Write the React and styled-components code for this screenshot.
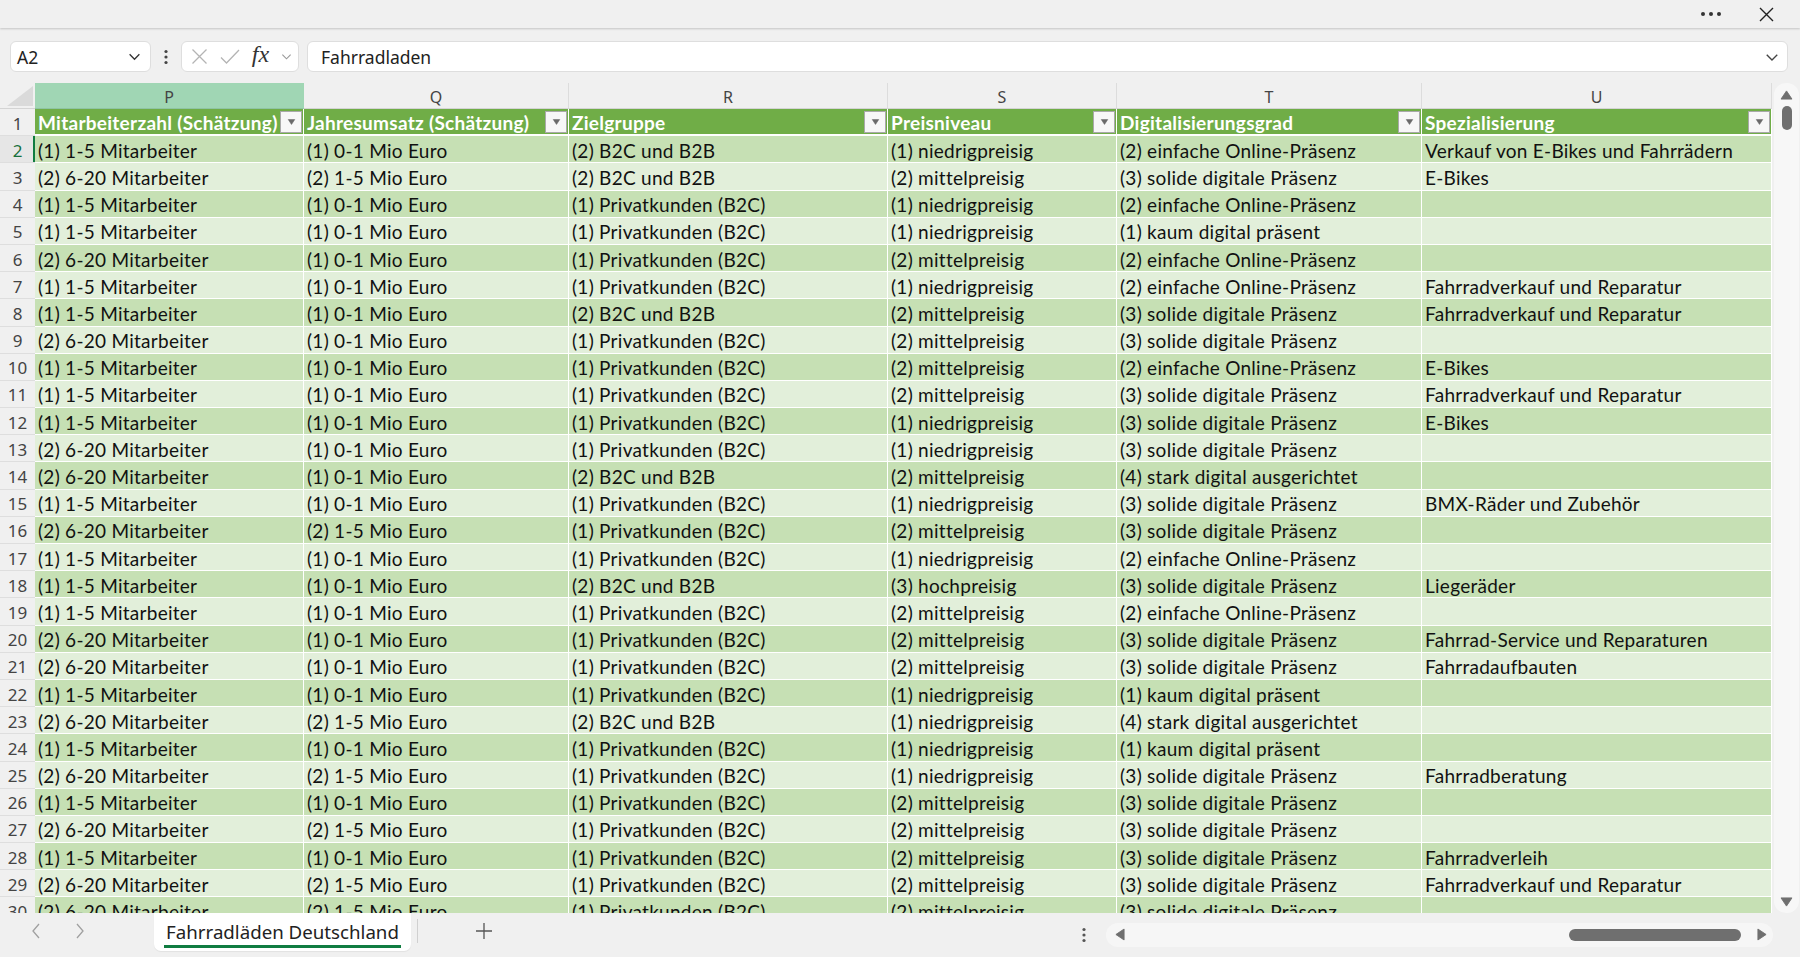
import React from "react";
import styled, { createGlobalStyle } from "styled-components";

const GlobalStyle = createGlobalStyle`
  html, body { margin: 0; padding: 0; }
  body {
    background: #f0f0f0;
    font-family: "Noto Sans", "Open Sans", sans-serif;
    color: #222;
  }
  * { box-sizing: border-box; }
`;

const COLS = [269, 265, 319, 229, 305, 350];
const TEMPLATE = `35px ${COLS.map((c) => `${c}px`).join(" ")}`;

const HEADERS = [
  "Mitarbeiterzahl (Schätzung)",
  "Jahresumsatz (Schätzung)",
  "Zielgruppe",
  "Preisniveau",
  "Digitalisierungsgrad",
  "Spezialisierung",
];
const LETTERS = ["P", "Q", "R", "S", "T", "U"];

const M1 = "(1) 1-5 Mitarbeiter";
const M2 = "(2) 6-20 Mitarbeiter";
const U1 = "(1) 0-1 Mio Euro";
const U2 = "(2) 1-5 Mio Euro";
const Z1 = "(1) Privatkunden (B2C)";
const Z2 = "(2) B2C und B2B";
const P1 = "(1) niedrigpreisig";
const P2 = "(2) mittelpreisig";
const P3 = "(3) hochpreisig";
const D1 = "(1) kaum digital präsent";
const D2 = "(2) einfache Online-Präsenz";
const D3 = "(3) solide digitale Präsenz";
const D4 = "(4) stark digital ausgerichtet";
const FVR = "Fahrradverkauf und Reparatur";

const ROWS = [
  [M1, U1, Z2, P1, D2, "Verkauf von E-Bikes und Fahrrädern"],
  [M2, U2, Z2, P2, D3, "E-Bikes"],
  [M1, U1, Z1, P1, D2, ""],
  [M1, U1, Z1, P1, D1, ""],
  [M2, U1, Z1, P2, D2, ""],
  [M1, U1, Z1, P1, D2, FVR],
  [M1, U1, Z2, P2, D3, FVR],
  [M2, U1, Z1, P2, D3, ""],
  [M1, U1, Z1, P2, D2, "E-Bikes"],
  [M1, U1, Z1, P2, D3, FVR],
  [M1, U1, Z1, P1, D3, "E-Bikes"],
  [M2, U1, Z1, P1, D3, ""],
  [M2, U1, Z2, P2, D4, ""],
  [M1, U1, Z1, P1, D3, "BMX-Räder und Zubehör"],
  [M2, U2, Z1, P2, D3, ""],
  [M1, U1, Z1, P1, D2, ""],
  [M1, U1, Z2, P3, D3, "Liegeräder"],
  [M1, U1, Z1, P2, D2, ""],
  [M2, U1, Z1, P2, D3, "Fahrrad-Service und Reparaturen"],
  [M2, U1, Z1, P2, D3, "Fahrradaufbauten"],
  [M1, U1, Z1, P1, D1, ""],
  [M2, U2, Z2, P1, D4, ""],
  [M1, U1, Z1, P1, D1, ""],
  [M2, U2, Z1, P1, D3, "Fahrradberatung"],
  [M1, U1, Z1, P2, D3, ""],
  [M2, U2, Z1, P2, D3, ""],
  [M1, U1, Z1, P2, D3, "Fahrradverleih"],
  [M2, U2, Z1, P2, D3, FVR],
  [M2, U2, Z1, P2, D3, ""],
];

/* ---------- window frame ---------- */

const Window = styled.div`
  width: 1800px;
  height: 957px;
  display: flex;
  flex-direction: column;
  overflow: hidden;
  background: #f0f0f0;
`;

const TopBar = styled.div`
  height: 28px;
  flex: none;
  display: flex;
  align-items: center;
  justify-content: flex-end;
  gap: 37px;
  padding-right: 26px;
  background: #f0f0f0;
  box-shadow: 0 1px 2px rgba(0, 0, 0, 0.18);
  position: relative;
  z-index: 1;
`;

const BarIcon = styled.button`
  border: 0;
  padding: 0;
  background: transparent;
  display: flex;
  align-items: center;
  justify-content: center;
  color: #333;
`;

/* ---------- formula bar ---------- */

const FormulaBar = styled.div`
  height: 55px;
  flex: none;
  display: flex;
  align-items: flex-start;
  padding: 13px 12px 0 10px;
`;

const Field = styled.div`
  height: 31px;
  background: #fff;
  border: 1px solid #dedede;
  border-radius: 6px;
  display: flex;
  align-items: center;
`;

const NameBox = styled(Field)`
  width: 141px;
  padding: 0 9px 0 6px;
  justify-content: space-between;
  font-size: 17.5px;
  color: #222;
`;

const Divider = styled.div`
  width: 30px;
  height: 31px;
  display: flex;
  align-items: center;
  justify-content: center;
  color: #444;
`;

const ActionBox = styled(Field)`
  width: 118px;
  padding: 0 6px 0 9px;
  justify-content: space-between;
`;

const Fx = styled.span`
  font-family: "Liberation Serif", "DejaVu Serif", serif;
  font-style: italic;
  font-size: 24px;
  color: #333;
  margin-top: -4px;
`;

const FormulaInput = styled(Field)`
  flex: 1;
  margin-left: 8px;
  padding: 0 8px 0 13px;
  justify-content: space-between;
  font-size: 17.5px;
  color: #222;
`;

/* ---------- grid ---------- */

const Body = styled.div`
  height: 830px;
  flex: none;
  display: flex;
`;

const Sheet = styled.div`
  width: 1772px;
  display: flex;
  flex-direction: column;
  overflow: hidden;
  background: #fff;
`;

const LetterRow = styled.div`
  height: 26px;
  flex: none;
  display: grid;
  grid-template-columns: ${TEMPLATE};
  background: #f0f0f0;
`;

const Corner = styled.div`
  border-bottom: 1px solid #d4d4d4;
  display: flex;
  align-items: flex-end;
  justify-content: flex-end;
  padding: 0 2px 2px 0;
`;

const Letter = styled.div`
  display: flex;
  align-items: center;
  justify-content: center;
  font-size: 16px;
  color: #444;
  background: ${(p) => (p.$active ? "#a0d6b4" : "#f0f0f0")};
  border-right: 1px solid ${(p) => (p.$active ? "#a0d6b4" : "#dcdcdc")};
  border-bottom: 1px solid ${(p) => (p.$active ? "#8fc4a3" : "#d4d4d4")};
  padding-top: 3px;
`;

const Row = styled.div`
  height: 27.2px;
  flex: none;
  display: grid;
  grid-template-columns: ${TEMPLATE};
`;

const RowNum = styled.div`
  display: flex;
  align-items: center;
  justify-content: center;
  padding-top: 2px;
  font-size: 17px;
  color: ${(p) => (p.$active ? "#18703c" : "#444")};
  background: ${(p) => (p.$active ? "#e6e6e6" : "#f0f0f0")};
  border-bottom: 1px solid #dedede;
  box-shadow: ${(p) => (p.$active ? "inset -2px 0 0 #107c41" : "none")};
`;

const Cell = styled.div`
  display: flex;
  align-items: center;
  padding: 2px 2px 0 3px;
  white-space: nowrap;
  overflow: hidden;
  font-family: "Lato", "Noto Sans", sans-serif;
  font-size: 19px;
  letter-spacing: 0.27px;
  color: #111;
  background: ${(p) => (p.$band ? "#c6e0b4" : "#e2efda")};
  border-right: 1px solid #fff;
  border-bottom: 1px solid #fff;
`;

const HeadCell = styled(Cell)`
  justify-content: space-between;
  background: #70ad47;
  color: #fff;
  font-weight: 700;
  border-bottom: 2px solid #fff;
  padding-right: 1px;
`;

const FilterButton = styled.span`
  width: 22px;
  height: 22px;
  flex: none;
  display: flex;
  align-items: center;
  justify-content: center;
  background: #f7f7f7;
  border: 1px solid #a9a9a9;
  margin-bottom: 1px;
`;

/* ---------- scrollbars ---------- */

const VScroll = styled.div`
  width: 28px;
  display: flex;
  padding: 0 1px 0 2px;
`;

const VTrack = styled.div`
  flex: 1;
  border-radius: 12px;
  background: #f7f7f7;
  display: flex;
  flex-direction: column;
  align-items: center;
  padding: 7px 0 6px;
`;

const VThumb = styled.div`
  width: 10px;
  height: 24px;
  border-radius: 5px;
  background: #6f6f6f;
  margin-top: 6px;
`;

const Spacer = styled.div`
  flex: 1;
`;

/* ---------- sheet tabs ---------- */

const TabBar = styled.div`
  height: 44px;
  flex: none;
  display: flex;
  align-items: flex-start;
  background: #f0f0f0;
`;

const NavGroup = styled.div`
  height: 36px;
  display: flex;
  align-items: center;
  gap: 34px;
  padding-left: 31px;
  width: 154px;
  color: #9a9a9a;
`;

const Tab = styled.div`
  width: 257px;
  height: 38px;
  background: #fff;
  border-radius: 0 0 7px 7px;
  display: flex;
  flex-direction: column;
  align-items: center;
  justify-content: center;
  font-size: 18.7px;
  color: #222;
  box-shadow: 0 1px 1px rgba(0, 0, 0, 0.06);
`;

const TabLabel = styled.span`
  padding: 0 2px 2px;
  border-bottom: 3px solid #107c41;
  line-height: 23px;
  margin-top: 4px;
`;

const TabSep = styled.div`
  width: 1px;
  height: 24px;
  background: #d0d0d0;
  margin: 6px 0 0 6px;
`;

const AddButton = styled.div`
  width: 132px;
  height: 36px;
  display: flex;
  align-items: center;
  justify-content: center;
  color: #555;
`;

const RightGroup = styled.div`
  margin-left: auto;
  display: flex;
  align-items: center;
  height: 38px;
  padding: 5px 27px 0 0;
  gap: 10px;
`;

const Kebab = styled.div`
  width: 24px;
  display: flex;
  justify-content: center;
  color: #444;
`;

const HTrack = styled.div`
  width: 667px;
  height: 24px;
  border-radius: 12px;
  background: #f6f6f6;
  display: flex;
  align-items: center;
  padding: 0 6px 0 9px;
`;

const HThumb = styled.div`
  width: 172px;
  height: 12px;
  border-radius: 6px;
  background: #6f6f6f;
  margin-left: auto;
  margin-right: 16px;
`;

/* ---------- small drawings ---------- */

const Chevron = ({ size = 12, color = "#333" }) => (
  <svg width={size} height={size} viewBox="0 0 12 12" fill="none">
    <path d="M1.5 4l4.5 4.5L10.5 4" stroke={color} strokeWidth="1.2" />
  </svg>
);

const Tri = ({ dir, color = "#6f6f6f", w = 12, h = 10 }) => {
  const pts = {
    up: "0,10 6,1 12,10",
    down: "0,1 12,1 6,10",
    left: "10,0 10,12 1,6",
    right: "1,0 1,12 10,6",
  }[dir];
  const vb = dir === "up" || dir === "down" ? "0 0 12 11" : "0 0 11 12";
  return (
    <svg width={w} height={h} viewBox={vb}>
      <polygon points={pts} fill={color} strokeLinejoin="round" stroke={color} strokeWidth="1" />
    </svg>
  );
};

const VDots = ({ color = "#444" }) => (
  <svg width="4" height="16" viewBox="0 0 4 16">
    <circle cx="2" cy="2.5" r="1.6" fill={color} />
    <circle cx="2" cy="8" r="1.6" fill={color} />
    <circle cx="2" cy="13.5" r="1.6" fill={color} />
  </svg>
);

export default function App() {
  return (
    <Window>
      <GlobalStyle />
      <TopBar>
        <BarIcon aria-label="Weitere Optionen">
          <svg width="22" height="6" viewBox="0 0 22 6">
            <circle cx="3" cy="3" r="2" fill="#333" />
            <circle cx="11" cy="3" r="2" fill="#333" />
            <circle cx="19" cy="3" r="2" fill="#333" />
          </svg>
        </BarIcon>
        <BarIcon aria-label="Schließen">
          <svg width="15" height="15" viewBox="0 0 15 15">
            <path d="M1 1l13 13M14 1L1 14" stroke="#222" strokeWidth="1.4" />
          </svg>
        </BarIcon>
      </TopBar>

      <FormulaBar>
        <NameBox>
          <span>A2</span>
          <Chevron size={13} />
        </NameBox>
        <Divider>
          <VDots />
        </Divider>
        <ActionBox>
          <svg width="17" height="17" viewBox="0 0 17 17">
            <path d="M1.5 1.5l14 14M15.5 1.5l-14 14" stroke="#b4b4b4" strokeWidth="1.3" />
          </svg>
          <svg width="20" height="16" viewBox="0 0 20 16">
            <path d="M1 8.5l5.5 5.5L19 1" stroke="#b4b4b4" strokeWidth="1.3" fill="none" />
          </svg>
          <Fx>fx</Fx>
          <Chevron size={11} color="#999" />
        </ActionBox>
        <FormulaInput>
          <span>Fahrradladen</span>
          <Chevron size={14} color="#444" />
        </FormulaInput>
      </FormulaBar>

      <Body>
        <Sheet>
          <LetterRow>
            <Corner>
              <svg width="26" height="20" viewBox="0 0 26 20">
                <polygon points="26,0 26,20 0,20" fill="#dadada" />
              </svg>
            </Corner>
            {LETTERS.map((l, i) => (
              <Letter key={l} $active={i === 0}>
                {l}
              </Letter>
            ))}
          </LetterRow>

          <Row>
            <RowNum>1</RowNum>
            {HEADERS.map((h) => (
              <HeadCell key={h}>
                <span>{h}</span>
                <FilterButton>
                  <Tri dir="down" color="#6a6a6a" w={9} h={6} />
                </FilterButton>
              </HeadCell>
            ))}
          </Row>

          {ROWS.map((cells, r) => (
            <Row key={r}>
              <RowNum $active={r === 0}>{r + 2}</RowNum>
              {cells.map((c, j) => (
                <Cell key={j} $band={r % 2 === 0}>
                  {c}
                </Cell>
              ))}
            </Row>
          ))}
        </Sheet>

        <VScroll>
          <VTrack>
            <Tri dir="up" w={13} h={10} />
            <VThumb />
            <Spacer />
            <Tri dir="down" w={13} h={10} />
          </VTrack>
        </VScroll>
      </Body>

      <TabBar>
        <NavGroup>
          <svg width="10" height="16" viewBox="0 0 10 16">
            <path d="M8 1L2 8l6 7" stroke="#a0a0a0" strokeWidth="1.3" fill="none" />
          </svg>
          <svg width="10" height="16" viewBox="0 0 10 16">
            <path d="M2 1l6 7-6 7" stroke="#a0a0a0" strokeWidth="1.3" fill="none" />
          </svg>
        </NavGroup>
        <Tab>
          <TabLabel>Fahrradläden Deutschland</TabLabel>
        </Tab>
        <TabSep />
        <AddButton>
          <svg width="18" height="18" viewBox="0 0 18 18">
            <path d="M9 1v16M1 9h16" stroke="#555" strokeWidth="1.3" />
          </svg>
        </AddButton>
        <RightGroup>
          <Kebab>
            <VDots color="#555" />
          </Kebab>
          <HTrack>
            <Tri dir="left" w={10} h={13} />
            <HThumb />
            <Tri dir="right" w={10} h={13} />
          </HTrack>
        </RightGroup>
      </TabBar>
    </Window>
  );
}
